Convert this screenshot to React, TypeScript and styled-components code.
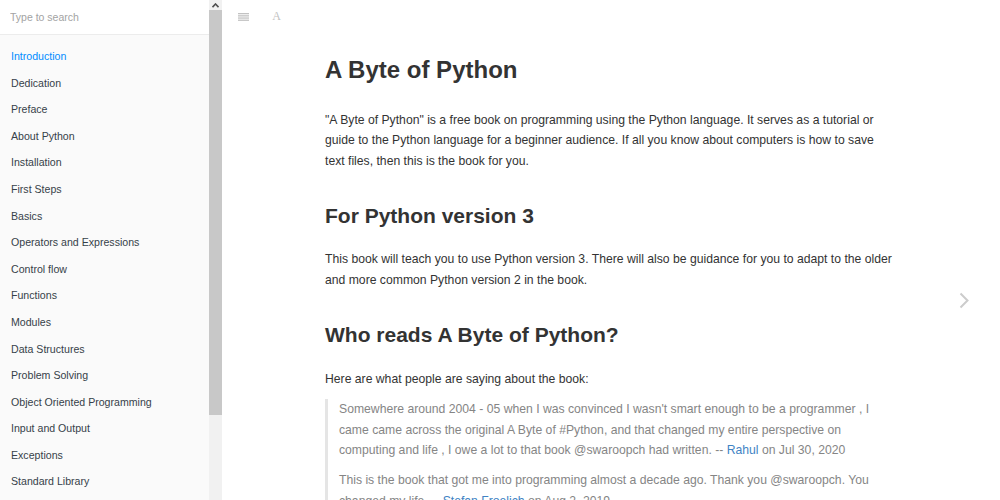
import React from "react";
import styled, { createGlobalStyle } from "styled-components";

const GlobalStyle = createGlobalStyle`
  html, body {
    margin: 0;
    padding: 0;
    height: 100%;
    overflow: hidden;
    background: #ffffff;
  }
  body {
    font-family: "Liberation Sans", Arial, sans-serif;
    color: #333333;
  }
  #root {
    height: 100%;
  }
`;

const Layout = styled.div`
  display: flex;
  height: 100vh;
`;

const Sidebar = styled.aside`
  display: flex;
  width: 222px;
  flex-shrink: 0;
  overflow: hidden;
`;

const SidebarInner = styled.div`
  flex: 1;
  display: flex;
  flex-direction: column;
  background: #fafafa;
  min-width: 0;
  overflow: hidden;
`;

const SearchBox = styled.div`
  flex-shrink: 0;
  height: 34px;
  display: flex;
  align-items: center;
  padding: 0 10px;
  background: #ffffff;
  border-bottom: 1px solid #ececec;
`;

const SearchInput = styled.input`
  width: 100%;
  border: none;
  outline: none;
  background: transparent;
  padding: 0;
  font-family: "Liberation Sans", Arial, sans-serif;
  font-size: 10.5px;
  color: #333;

  &::placeholder {
    color: #a3a3a3;
  }
`;

const Summary = styled.ul`
  flex-shrink: 0;
  list-style: none;
  margin: 0;
  padding: 7.7px 0 0;
`;

const SummaryItem = styled.li<{ $active?: boolean }>`
  padding: 6.3px 11px;
  font-size: 10.6px;
  line-height: 14px;
  white-space: nowrap;
  color: ${(p) => (p.$active ? "#008cff" : "#364149")};
`;

const Scrollbar = styled.div`
  width: 13px;
  flex-shrink: 0;
  display: flex;
  flex-direction: column;
  align-items: center;
  background: #f1f1f1;
`;

const ScrollArrow = styled.div`
  height: 10px;
  width: 100%;
  display: flex;
  align-items: center;
  justify-content: center;
`;

const ScrollThumb = styled.div`
  width: 13px;
  height: 405px;
  background: #c8c8c8;
`;

const Main = styled.main`
  position: relative;
  flex: 1;
  background: #ffffff;
`;

const Toolbar = styled.div`
  height: 33px;
  display: flex;
  align-items: center;
  gap: 22px;
  padding-left: 16px;
`;

const ToolButton = styled.span`
  display: flex;
  align-items: center;
  justify-content: center;
  width: 11px;
  color: #c2c2c2;
  font-family: "Liberation Serif", "Times New Roman", serif;
  font-size: 12px;
`;

const Page = styled.article`
  width: 569px;
  padding-top: 2px;
  padding-left: 103px;
  font-size: 12.2px;
  line-height: 20.4px;
`;

const Title = styled.h1`
  margin: 20.6px 0 25.4px;
  font-size: 24px;
  line-height: 28.8px;
  font-weight: bold;
  color: #333;
`;

const Heading = styled.h2`
  margin: 31.6px 0 21.7px;
  font-size: 21px;
  line-height: 25.2px;
  font-weight: bold;
  color: #333;
`;

const Para = styled.p`
  margin: 0 0 10px;
`;

const Quote = styled.blockquote`
  margin: 0;
  padding: 0 0 0 11px;
  border-left: 3px solid #e5e5e5;
  color: #858585;
`;

const Link = styled.a`
  color: #4183c4;
  text-decoration: none;
`;

const NextButton = styled.div`
  position: absolute;
  right: 30px;
  top: 291px;
  width: 12px;
  height: 18px;
  display: flex;
  align-items: center;
  justify-content: center;
`;

const chapters = [
  "Introduction",
  "Dedication",
  "Preface",
  "About Python",
  "Installation",
  "First Steps",
  "Basics",
  "Operators and Expressions",
  "Control flow",
  "Functions",
  "Modules",
  "Data Structures",
  "Problem Solving",
  "Object Oriented Programming",
  "Input and Output",
  "Exceptions",
  "Standard Library",
];

const App: React.FC = () => {
  return (
    <>
      <GlobalStyle />
      <Layout>
        <Sidebar>
          <SidebarInner>
            <SearchBox>
              <SearchInput type="text" placeholder="Type to search" />
            </SearchBox>
            <Summary>
              {chapters.map((c, i) => (
                <SummaryItem key={c} $active={i === 0}>
                  {c}
                </SummaryItem>
              ))}
            </Summary>
          </SidebarInner>
          <Scrollbar>
            <ScrollArrow>
              <svg width="7" height="5" viewBox="0 0 7 5">
                <path d="M0.5 4.2 L3.5 1 L6.5 4.2" fill="none" stroke="#505050" strokeWidth="1.6" />
              </svg>
            </ScrollArrow>
            <ScrollThumb />
          </Scrollbar>
        </Sidebar>

        <Main>
          <Toolbar>
            <ToolButton>
              <svg width="11" height="8" viewBox="0 0 11 8">
                <rect x="0" y="0" width="11" height="1.3" fill="#c2c2c2" />
                <rect x="0" y="2.2" width="11" height="1.3" fill="#c2c2c2" />
                <rect x="0" y="4.4" width="11" height="1.3" fill="#c2c2c2" />
                <rect x="0" y="6.6" width="11" height="1.3" fill="#c2c2c2" />
              </svg>
            </ToolButton>
            <ToolButton>A</ToolButton>
          </Toolbar>

          <Page>
            <Title>A Byte of Python</Title>
            <Para>
              "A Byte of Python" is a free book on programming using the Python language. It
              serves as a tutorial or guide to the Python language for a beginner audience. If
              all you know about computers is how to save text files, then this is the book for
              you.
            </Para>

            <Heading>For Python version 3</Heading>
            <Para>
              This book will teach you to use Python version 3. There will also be guidance for
              you to adapt to the older and more common Python version 2 in the book.
            </Para>

            <Heading>Who reads A Byte of Python?</Heading>
            <Para>Here are what people are saying about the book:</Para>

            <Quote>
              <Para>
                Somewhere around 2004 - 05 when I was convinced I wasn't smart enough to be a
                programmer , I came came across the original A Byte of #Python, and that changed
                my entire perspective on computing and life , I owe a lot to that book @swaroopch
                had written. -- <Link href="#">Rahul</Link> on Jul 30, 2020
              </Para>
              <Para>
                This is the book that got me into programming almost a decade ago. Thank you
                @swaroopch. You changed my life. -- <Link href="#">Stefan Froelich</Link> on Aug
                2, 2019
              </Para>
            </Quote>
          </Page>

          <NextButton>
            <svg width="10" height="17" viewBox="0 0 10 17">
              <path d="M1.5 1.5 L8.5 8.5 L1.5 15.5" fill="none" stroke="#cccccc" strokeWidth="2" />
            </svg>
          </NextButton>
        </Main>
      </Layout>
    </>
  );
};

export default App;
